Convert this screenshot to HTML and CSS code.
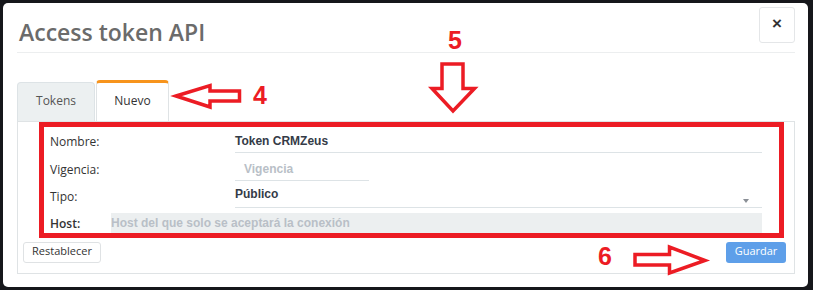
FILE: index.html
```html
<!DOCTYPE html>
<html lang="es">
<head>
<meta charset="utf-8">
<title>Access token API</title>
<link rel="stylesheet" href="styles.css">
</head>
<body>
<div class="modal">
  <div class="modal-header">
    <h4 class="modal-title">Access token API</h4>
    <button class="close" type="button">&times;</button>
  </div>
  <div class="modal-body">
    <ul class="tabs">
      <li class="tab">Tokens</li>
      <li class="tab active">Nuevo</li>
    </ul>
    <div class="tab-panel">
      <div class="form">
        <div class="row">
          <span class="lbl">Nombre:</span>
          <div class="field">Token CRMZeus</div>
        </div>
        <div class="row">
          <span class="lbl">Vigencia:</span>
          <div class="field field-short placeholder">Vigencia</div>
        </div>
        <div class="row">
          <span class="lbl">Tipo:</span>
          <div class="field field-select">
            <span>Público</span>
            <svg class="caret" width="6" height="4" viewBox="0 0 6 4"><path d="M0 0H6L3 4Z" fill="#8a8f96"/></svg>
          </div>
        </div>
        <div class="row">
          <span class="lbl lbl-host">Host:</span>
          <div class="field field-host placeholder">Host del que solo se aceptará la conexión</div>
        </div>
      </div>
      <div class="actions">
        <div class="btn btn-default">Restablecer</div>
        <div class="btn btn-primary">Guardar</div>
      </div>
    </div>
  </div>
</div>
<svg class="annot" width="813" height="290" viewBox="0 0 813 290">
  <rect x="41.5" y="124.5" width="740" height="111" fill="none" stroke="#ec1c24" stroke-width="5"/>
  <path d="M176 96 L210 85.5 L210 91 L239.5 91 L239.5 101 L210 101 L210 107 Z" fill="none" stroke="#ec1c24" stroke-width="3.5" stroke-linejoin="miter"/>
  <path d="M442 64 L463 64 L463 88.5 L474.5 88.5 L453 111 L432 88.5 L442 88.5 Z" fill="none" stroke="#ec1c24" stroke-width="3.5" stroke-linejoin="miter"/>
  <path d="M635 254.5 L669.5 254.5 L669.5 247 L705 260.5 L669.5 273 L669.5 265 L635 265 Z" fill="none" stroke="#ec1c24" stroke-width="3.5" stroke-linejoin="miter"/>
  <text class="num" x="253" y="104">4</text>
  <text class="num" x="448" y="49">5</text>
  <text class="num" x="598" y="265">6</text>
</svg>
</body>
</html>
```
FILE: styles.css
```css
html, body {
  margin: 0;
  padding: 0;
}
body {
  width: 813px;
  height: 290px;
  overflow: hidden;
  position: relative;
  background: #16171b;
  font-family: "Open Sans", "Liberation Sans", sans-serif;
}
.modal {
  box-sizing: border-box;
  margin: 3px 0 0 3px;
  width: 805px;
  height: 284px;
  background: #fff;
  border-radius: 5px;
  padding: 0 13px 0 14px;
}
.modal-header {
  display: flex;
  justify-content: space-between;
  align-items: flex-start;
  padding-top: 4px;
  height: 45px;
  border-bottom: 1px solid #eceeef;
}
.modal-title {
  margin: 9px 0 0 2px;
  font-size: 23px;
  line-height: 32px;
  font-weight: 600;
  color: #6b6b6b;
}
.close {
  box-sizing: border-box;
  width: 36px;
  height: 36px;
  margin: 0;
  padding: 0 0 2px 0;
  border: 1px solid #e4e6e8;
  border-radius: 3px;
  background: #fff;
  color: #333;
  font-family: "Liberation Sans", sans-serif;
  font-size: 17px;
  font-weight: 700;
}
.modal-body {
  padding-top: 27px;
}
.tabs {
  display: flex;
  align-items: flex-end;
  gap: 1px;
  list-style: none;
  margin: 0;
  padding: 0;
  height: 41px;
}
.tab {
  box-sizing: border-box;
  width: 78px;
  height: 39px;
  padding-top: 9px;
  background: #ecf0f1;
  border: 1px solid #dde3e6;
  border-bottom: none;
  border-radius: 4px 4px 0 0;
  text-align: center;
  font-size: 12px;
  line-height: 17px;
  color: #555;
}
.tab.active {
  width: 73px;
  height: 41px;
  background: #fff;
  border-color: #dfe3e5;
  border-top: 3px solid #f7941d;
  color: #333;
}
.tab-panel {
  box-sizing: border-box;
  height: 153px;
  border: 1px solid #dfe3e5;
}
.form {
  display: flex;
  flex-direction: column;
  gap: 5px;
  padding: 9px 32px 0 32px;
}
.row {
  display: flex;
  align-items: flex-start;
}
.row:first-child {
  margin-bottom: 1px;
}
.lbl {
  width: 185px;
  flex: none;
  font-size: 12px;
  line-height: 21px;
  color: #333;
}
.lbl-host {
  width: 61px;
  font-weight: 600;
}
.field {
  box-sizing: border-box;
  width: 527px;
  height: 22px;
  border-bottom: 1px solid #dde3e6;
  font-family: "Liberation Sans", sans-serif;
  font-weight: 700;
  font-size: 12px;
  line-height: 21px;
  color: #343b47;
  white-space: nowrap;
}
.placeholder {
  color: #b9bfc7;
}
.field-short {
  width: 134px;
  padding-left: 9px;
}
.field-select {
  display: flex;
  justify-content: space-between;
  align-items: flex-start;
  line-height: 16px;
}
.caret {
  margin: 13px 13px 0 0;
}
.field-host {
  width: 651px;
  border-bottom: none;
  background: #eceff0;
  line-height: 20px;
  color: #b9bfc7;
}
.actions {
  display: flex;
  justify-content: space-between;
  padding: 0 8px 0 5px;
  margin-top: 7px;
}
.btn {
  box-sizing: border-box;
  height: 21px;
  border-radius: 3px;
  text-align: center;
  font-size: 11px;
}
.btn-default {
  width: 78px;
  border: 1px solid #dfe2e4;
  background: #fff;
  color: #333;
  line-height: 16px;
}
.btn-primary {
  width: 60px;
  background: #5e9fe9;
  color: #fff;
  line-height: 17px;
}
.annot {
  position: absolute;
  top: 0;
  left: 0;
  pointer-events: none;
}
.num {
  font-family: "Liberation Sans", sans-serif;
  font-weight: 700;
  font-size: 25px;
  fill: #ec1c24;
}
```
